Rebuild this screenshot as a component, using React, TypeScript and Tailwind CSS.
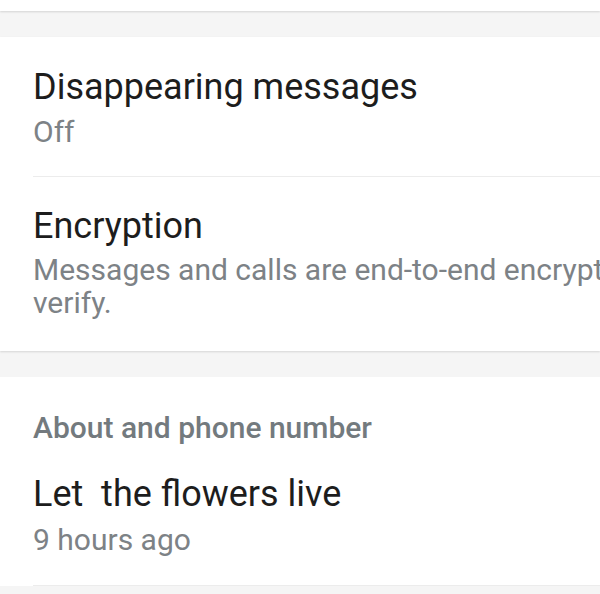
const font = { fontFamily: "Roboto, 'Noto Sans', sans-serif" };

function Title({ children }: { children: React.ReactNode }) {
  return <div className="text-[36px] leading-[44px] text-[#1d1d1d] whitespace-pre">{children}</div>;
}

function Sub({ children, className = "" }: { children: React.ReactNode; className?: string }) {
  return <div className={`text-[30px] leading-[36px] text-[#7d8286] whitespace-nowrap ${className}`}>{children}</div>;
}

export default function App() {
  return (
    <div className="w-[600px] h-[594px] overflow-hidden bg-[#f5f5f5]" style={font}>
      <div className="h-[11px] bg-white shadow-[0_1px_2px_rgba(0,0,0,0.14)]" />
      <div className="h-[26px]" />

      <section className="bg-white shadow-[0_1px_2px_rgba(0,0,0,0.13)]">
        {/* Disappearing messages */}
        <div className="pl-[33px]">
          <div className="pt-[28px] pb-[26px] border-b border-[#ececec]">
            <Title>Disappearing messages</Title>
            <Sub className="mt-[5px]">Off</Sub>
          </div>
        </div>

        {/* Encryption */}
        <div className="pl-[33px] pt-[27px] pb-[32px]">
          <Title>Encryption</Title>
          <div className="mt-[5px] text-[30px] leading-[33px] text-[#7d8286]">
            <div className="whitespace-nowrap">Messages and calls are end-to-end encrypted. Tap to</div>
            <div>verify.</div>
          </div>
        </div>
      </section>

      <div className="h-[26px]" />

      <section className="bg-white">
        <div className="pl-[33px] pt-[33px] text-[30px] leading-[36px] font-medium text-[#737a7e]">
          About and phone number
        </div>
        <div className="pl-[33px]">
          <div className="pt-[26px] pb-[27px] border-b border-[#ececec]">
            <Title>Let  the flowers live</Title>
            <Sub className="mt-[6px]">9 hours ago</Sub>
          </div>
        </div>
      </section>
    </div>
  );
}
